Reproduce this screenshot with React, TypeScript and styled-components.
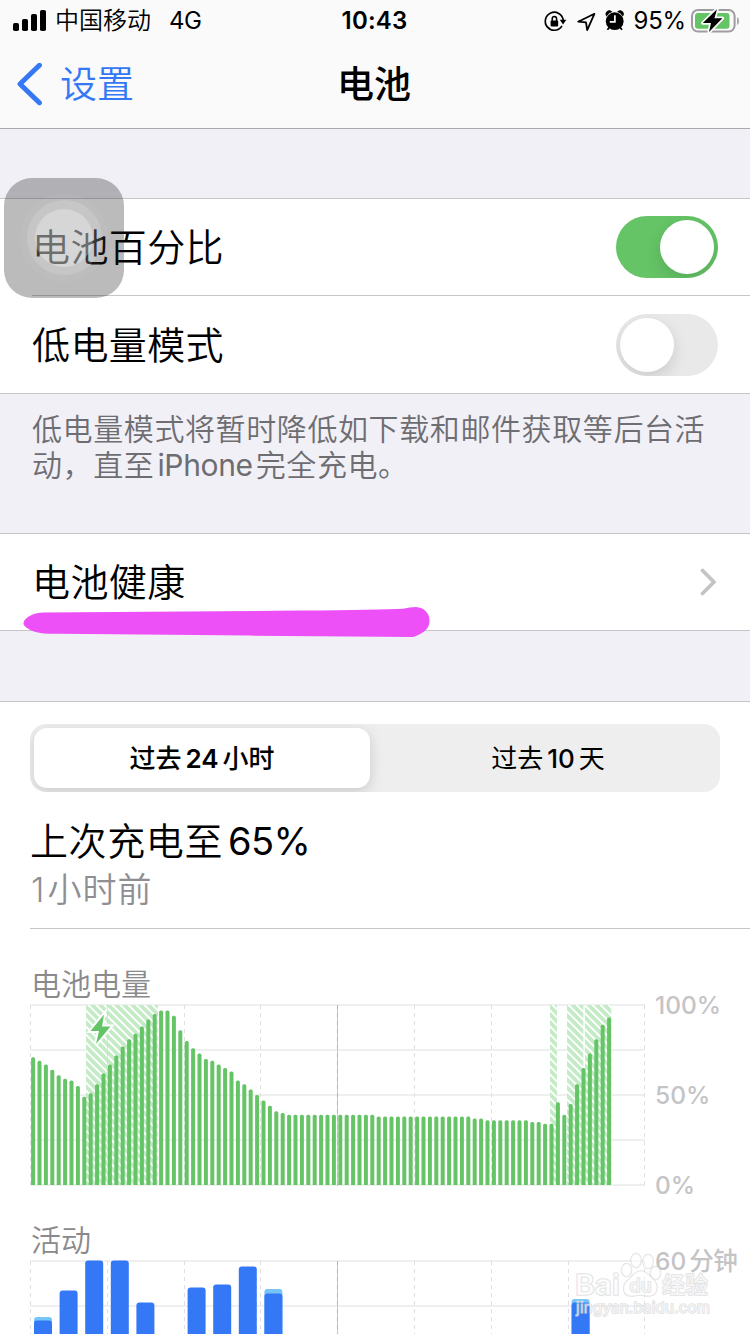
import React from "react";
import styled, { createGlobalStyle } from "styled-components";

const GlobalStyle = createGlobalStyle`
  html, body { margin: 0; padding: 0; }
  body {
    width: 750px;
    height: 1334px;
    overflow: hidden;
    background: #f1f0f6;
    font-family: Inter, "Noto Sans CJK SC", sans-serif;
    color: #000;
  }
  * { box-sizing: border-box; }
`;

const Screen = styled.main`
  position: relative;
  width: 750px;
  height: 1334px;
  overflow: hidden;
  display: flex;
  flex-direction: column;
  background: #f1f0f6;
`;

const Header = styled.header`
  flex: none;
  height: 129px;
  background: #fafafb;
  border-bottom: 1px solid #a9a9ac;
`;

const StatusBar = styled.div`
  display: grid;
  grid-template-columns: 1fr auto 1fr;
  align-items: center;
  height: 40px;
  padding: 0 11px 0 13px;
  font-size: 24px;
  line-height: 40px;
`;

const StatusGroup = styled.div<{ $end?: boolean }>`
  display: flex;
  align-items: center;
  height: 40px;
  justify-content: ${(p) => (p.$end ? "flex-end" : "flex-start")};
`;

const Carrier = styled.span`
  margin-left: 9px;
  padding-top: 1px;
  font-weight: 350;
`;

const Network = styled.span`
  margin-left: 18px;
  padding-top: 1px;
  letter-spacing: -0.5px;
`;

const Clock = styled.span`
  padding-top: 1px;
  margin-left: -3px;
  font-weight: 600;
  letter-spacing: 0.2px;
`;

const Percent = styled.span`
  margin: 0 5px 0 7px;
  padding-top: 1px;
  letter-spacing: -0.2px;
`;

const NavBar = styled.div`
  display: grid;
  grid-template-columns: 1fr auto 1fr;
  align-items: center;
  height: 88px;
  padding: 0 17px 0 15px;
`;

const BackButton = styled.div`
  display: flex;
  align-items: center;
  gap: 17px;
  color: #3478f6;
  font-size: 37px;
  font-weight: 350;
  line-height: 86px;
`;

const Title = styled.h1`
  margin: 0;
  padding-top: 1px;
  font-size: 37px;
  font-weight: 500;
  line-height: 88px;
`;

const Group = styled.section<{ $top: number }>`
  flex: none;
  margin-top: ${(p) => p.$top}px;
  background: #fff;
  border-top: 1px solid #c6c6c9;
  border-bottom: 1px solid #c6c6c9;
`;

const Row = styled.div<{ $divided?: boolean; $height: number }>`
  display: flex;
  align-items: center;
  justify-content: space-between;
  height: ${(p) => p.$height}px;
  margin-left: 32px;
  padding-right: 32px;
  border-bottom: ${(p) => (p.$divided ? "1px solid #c6c6c9" : "none")};
  font-size: 38px;
  letter-spacing: 0.4px;
  font-weight: 350;
`;

const RowLabel = styled.span<{ $lift?: number }>`
  padding-bottom: ${(p) => p.$lift ?? 5}px;
`;

const Toggle = styled.span<{ $on: boolean }>`
  display: flex;
  justify-content: ${(p) => (p.$on ? "flex-end" : "flex-start")};
  width: 102px;
  height: 62px;
  padding: 4px;
  border-radius: 31px;
  overflow: hidden;
  background: ${(p) => (p.$on ? "#65c466" : "#e9e9ea")};
`;

const Knob = styled.span`
  width: 54px;
  height: 54px;
  border-radius: 50%;
  background: #fff;
  box-shadow: 0 6px 16px rgba(0, 0, 0, 0.13);
`;

const Footnote = styled.p`
  flex: none;
  height: 139px;
  margin: 0;
  padding: 17px 32px 0;
  color: #6d6d72;
  font-size: 30px;
  font-weight: 350;
  line-height: 36px;
  letter-spacing: 0.6px;
  white-space: nowrap;
`;

const Latin = styled.span<{ $gap: number; $spacing?: number; $weight?: number }>`
  margin: 0 ${(p) => p.$gap}px;
  font-weight: ${(p) => p.$weight ?? 400};
  letter-spacing: ${(p) => p.$spacing ?? 0}px;
`;

const Usage = styled.section`
  flex: 1;
  margin-top: 70px;
  padding-left: 30px;
  background: #fff;
  border-top: 1px solid #c6c6c9;
`;

const Segmented = styled.div`
  display: flex;
  width: 690px;
  height: 68px;
  margin-top: 22px;
  padding: 4px;
  border-radius: 16px;
  overflow: hidden;
  background: #eeeeee;
`;

const Segment = styled.div<{ $active?: boolean }>`
  flex: ${(p) => (p.$active ? "0 0 336px" : "1")};
  padding-left: ${(p) => (p.$active ? 0 : 10)}px;
  height: 60px;
  border-radius: 13px;
  text-align: center;
  font-size: 26px;
  line-height: 62px;
  font-weight: ${(p) => (p.$active ? 500 : 400)};
  background: ${(p) => (p.$active ? "#fff" : "transparent")};
  box-shadow: ${(p) => (p.$active ? "0 4px 14px rgba(0,0,0,.15)" : "none")};
`;

const Summary = styled.div`
  height: 137px;
  padding-top: 24px;
  border-bottom: 1px solid #c6c6c9;
`;

const LastCharge = styled.div`
  height: 50px;
  font-size: 38px;
  font-weight: 350;
  line-height: 50px;
  letter-spacing: 0.6px;
`;

const TimeAgo = styled.div`
  height: 50px;
  padding-left: 1px;
  font-size: 34px;
  font-weight: 350;
  line-height: 48px;
  letter-spacing: 1px;
  color: #8e8e93;
`;

const Hours = styled.span`
  margin-left: 2px;
  letter-spacing: 1.1px;
`;

const ChartTitle = styled.h2<{ $top: number }>`
  margin: ${(p) => p.$top}px 0 0;
  padding-left: 1px;
  height: 40px;
  color: #8a8a8d;
  font-size: 30px;
  font-weight: 350;
  line-height: 40px;
`;

const ChartRow = styled.div`
  display: flex;
  align-items: flex-start;
`;

const ChartArea = styled.svg`
  flex: none;
  display: block;
`;

const AxisLabels = styled.div<{ $height: number }>`
  display: flex;
  flex-direction: column;
  justify-content: space-between;
  height: ${(p) => p.$height}px;
  margin-top: -14px;
  margin-left: 9px;
  color: #c4c4c6;
  font-size: 24.5px;
  font-weight: 500;
  line-height: 30px;
  white-space: nowrap;
`;

const Marker = styled.svg`
  position: absolute;
  left: 20px;
  top: 604px;
`;

const AssistiveTouch = styled.div`
  position: absolute;
  left: 4px;
  top: 178px;
  width: 120px;
  height: 120px;
  padding-bottom: 1px;
  display: grid;
  place-items: center;
  border-radius: 28px;
  background: rgba(30, 30, 30, 0.3);
`;

const Ring = styled.div<{ $size: number; $alpha: number }>`
  display: grid;
  place-items: center;
  width: ${(p) => p.$size}px;
  height: ${(p) => p.$size}px;
  border-radius: 50%;
  background: rgba(255, 255, 255, ${(p) => p.$alpha});
`;

const Watermark = styled.svg`
  position: absolute;
  left: 566px;
  top: 1246px;
`;

const pct: number[] = [
  71, 69, 67, 64, 61, 59, 58, 55, 49, 51, 56, 62, 67, 72, 77, 81, 84, 88, 92, 95,
  97, 97, 94, 86, 80, 76, 73, 70, 69, 67, 65, 63, 58, 56, 53, 50, 47, 44, 41, 40,
  ...Array(14).fill(39),
  ...Array(15).fill(38),
  37, 37,
  ...Array(7).fill(36),
  35, 35, 34, 34, 46, 39, 45, 56, 65, 73, 81, 89, 93,
];

const charging: [number, number][] = [
  [56, 72],
  [520, 7],
  [537, 16.3],
  [555, 26.3],
];

type Activity = { slot: number; top: number; idle?: number };
const activity: Activity[] = [
  { slot: 0, top: 60, idle: 56.5 },
  { slot: 1, top: 30 },
  { slot: 2, top: 0 },
  { slot: 3, top: 0 },
  { slot: 4, top: 42 },
  { slot: 6, top: 27 },
  { slot: 7, top: 24 },
  { slot: 8, top: 6 },
  { slot: 9, top: 33, idle: 28.5 },
  { slot: 21, top: 42, idle: 38.5 },
];

const Grid = ({ height }: { height: number }) => (
  <g>
    {[0, 45, 90, 135, 180]
      .filter((y) => y < height)
      .map((y) => (
        <rect key={y} x={0} y={y} width={615} height={2} fill="#efeff0" />
      ))}
    {Array.from({ length: 9 }, (_, i) => {
      const x = 0.5 + Math.round(i * 76.8);
      return i === 4 ? (
        <g key={i}>
          <path d={`M${x} 1V${height}`} stroke="#cbcbcd" />
          <path d={`M${x} 1V${height}`} stroke="#b3b3b5" strokeDasharray="4 4" />
        </g>
      ) : (
        <path key={i} d={`M${x} 1V${height}`} stroke="#dfdfe1" strokeDasharray="4 4" />
      );
    })}
  </g>
);

const LevelChart = () => (
  <ChartArea width={616} height={182} viewBox="0 0 616 182">
    <defs>
      <pattern
        id="hatch"
        width="5.66"
        height="5.66"
        patternUnits="userSpaceOnUse"
        patternTransform="rotate(-45)"
      >
        <rect width="5.66" height="5.66" fill="#c3ebc6" />
        <rect width="1.9" height="5.66" fill="#fff" />
      </pattern>
    </defs>
    <Grid height={182} />
    {charging.map(([x, w]) => (
      <rect key={x} x={x} y={1} width={w} height={180} fill="url(#hatch)" />
    ))}
    <path d="M77.5 1V181" stroke="#9fb8a1" strokeOpacity=".35" strokeDasharray="4 4" />
    {pct.map((p, i) => (
      <path
        key={i}
        d={`M${1.1 + i * 6.4} 181v${-(p * 1.8 - 1.6)}q0 -1.6 1.6 -1.6h.8q1.6 0 1.6 1.6V181z`}
        fill="#65c466"
      />
    ))}
    <path
      d="M74 10.5L60.5 27H69L66 40L80.5 22.5H72z"
      fill="#65c466"
      stroke="#fff"
      strokeWidth="4"
      paintOrder="stroke"
    />
  </ChartArea>
);

const ActivityChart = () => (
  <ChartArea width={616} height={74} viewBox="0 0 616 74">
    <Grid height={74} />
    {activity.map(({ slot, top, idle }) => {
      const x = 4 + slot * 25.6;
      return (
        <g key={slot}>
          {idle !== undefined && (
            <rect x={x} y={idle + 0.5} width={18} height={90} rx={3} fill="#76c5f8" />
          )}
          <rect x={x} y={top + 0.5} width={18} height={90} rx={3} fill="#3478f6" />
        </g>
      );
    })}
  </ChartArea>
);

const SignalIcon = () => (
  <svg width="33" height="22" viewBox="0 0 33 22">
    <rect x="0" y="13" width="6" height="8" rx="1.8" />
    <rect x="9" y="9" width="6" height="12" rx="1.8" />
    <rect x="18" y="4" width="6" height="17" rx="1.8" />
    <rect x="27" y="0" width="6" height="21" rx="1.8" />
  </svg>
);

const StatusIcons = () => (
  <svg width="84" height="24" viewBox="543 8 84 24">
    <path
      d="M561.6 25.5A9 9 0 1 1 563.2 19"
      fill="none"
      stroke="#000"
      strokeWidth="1.7"
      strokeLinecap="round"
    />
    <path d="M559.8 18.8H566.4L563 23.4z" />
    <rect x="550.6" y="19.4" width="7.6" height="6" rx="1" />
    <path d="M552.2 20v-2a2.2 2.4 0 0 1 4.4 0v2" fill="none" stroke="#000" strokeWidth="1.5" />
    <path
      d="M594.4 12.8L578.2 20.7L586 21.4L587.2 29.2z"
      fill="none"
      stroke="#000"
      strokeWidth="1.8"
      strokeLinejoin="round"
    />
    <circle cx="614.7" cy="20.2" r="8.9" />
    <path
      d="M606.6 14.4A8 8 0 0 1 611.2 10.7A3 3 0 0 0 606.6 14.4zM622.8 14.4A8 8 0 0 0 618.2 10.7A3 3 0 0 1 622.8 14.4z"
      stroke="#000"
      strokeWidth="1.2"
    />
    <path d="M609.5 26.2L607.4 28.8M619.9 26.2L622 28.8" stroke="#000" strokeWidth="1.8" />
    <path d="M614.9 14.2V20.8H609.8" fill="none" stroke="#fafafb" strokeWidth="1.7" />
  </svg>
);

const BatteryIcon = () => (
  <svg width="48" height="26" viewBox="691 7 48 26">
    <rect x="692" y="9" width="42.6" height="21.6" rx="6" fill="none" stroke="#9d9d9f" strokeWidth="2" />
    <rect x="695" y="12" width="34.5" height="15.8" rx="3" fill="#65c466" />
    <path d="M737.2 16v8q1.8-1 1.8-4t-1.8-4z" fill="#9d9d9f" />
    <path
      d="M717 8.2L702.8 22H711L709 31L722.4 17.2H714.4z"
      stroke="#fafafb"
      strokeWidth="3.4"
      paintOrder="stroke"
      strokeLinejoin="round"
    />
  </svg>
);

export default function App() {
  return (
    <>
      <GlobalStyle />
      <Screen>
        <Header>
          <StatusBar>
            <StatusGroup>
              <SignalIcon />
              <Carrier>中国移动</Carrier>
              <Network>4G</Network>
            </StatusGroup>
            <Clock>10:43</Clock>
            <StatusGroup $end>
              <StatusIcons />
              <Percent>95%</Percent>
              <BatteryIcon />
            </StatusGroup>
          </StatusBar>
          <NavBar>
            <BackButton>
              <svg width="28" height="44" viewBox="0 0 28 44">
                <path
                  d="M24.4 2.3L5 21L24.4 39.7"
                  fill="none"
                  stroke="#3478f6"
                  strokeWidth="5"
                  strokeLinecap="round"
                  strokeLinejoin="round"
                />
              </svg>
              <span>设置</span>
            </BackButton>
            <Title>电池</Title>
          </NavBar>
        </Header>

        <Group $top={69}>
          <Row $height={97} $divided>
            <RowLabel>电池百分比</RowLabel>
            <Toggle $on>
              <Knob />
            </Toggle>
          </Row>
          <Row $height={97}>
            <RowLabel $lift={4}>低电量模式</RowLabel>
            <Toggle $on={false}>
              <Knob />
            </Toggle>
          </Row>
        </Group>
        <Footnote>
          低电量模式将暂时降低如下载和邮件获取等后台活
          <br />
          动，直至
          <Latin $gap={3} $spacing={-0.35}>
            iPhone
          </Latin>
          完全充电。
        </Footnote>

        <Group $top={0}>
          <Row $height={96}>
            <RowLabel>电池健康</RowLabel>
            <svg width="18" height="28" viewBox="0 0 18 28">
              <path
                d="M2.5 2.5L14 14L2.5 25.5"
                fill="none"
                stroke="#c4c4c6"
                strokeWidth="3.8"
                strokeLinecap="round"
                strokeLinejoin="round"
              />
            </svg>
          </Row>
        </Group>

        <Usage>
          <Segmented>
            <Segment $active>
              过去
              <Latin $gap={4} $weight={600}>
                24
              </Latin>
              小时
            </Segment>
            <Segment>
              过去
              <Latin $gap={4} $weight={500}>
                10
              </Latin>
              天
            </Segment>
          </Segmented>
          <Summary>
            <LastCharge>
              上次充电至
              <Latin $gap={5} $spacing={-0.6}>
                65%
              </Latin>
            </LastCharge>
            <TimeAgo>
              1<Hours>小时前</Hours>
            </TimeAgo>
          </Summary>
          <ChartTitle $top={35}>电池电量</ChartTitle>
          <ChartRow>
            <LevelChart />
            <AxisLabels $height={210}>
              <span>100%</span>
              <span>50%</span>
              <span>0%</span>
            </AxisLabels>
          </ChartRow>
          <ChartTitle $top={20}>活动</ChartTitle>
          <ChartRow>
            <ActivityChart />
            <AxisLabels $height={30}>
              <span>
                60
                <Latin $gap={3} $spacing={-0.5} $weight={500}>
                  分钟
                </Latin>
              </span>
            </AxisLabels>
          </ChartRow>
        </Usage>

        <Marker width="412" height="36" viewBox="20 604 412 36">
          <path
            d="M23.5 622.8C25 617 34 612.8 44 612.6L300 610.6Q380 610 403 608.8Q410 607 416 607C424 607.5 429.5 613 429.5 620.5C429.5 628 425 633 413 637L250 635.6L60 633.8C43 633.8 35 633 29 629.2Q23 626 23.5 622.8z"
            fill="#ec50f6"
          />
        </Marker>

        <AssistiveTouch>
          <Ring $size={88} $alpha={0.04}>
            <Ring $size={75} $alpha={0.15}>
              <Ring $size={58} $alpha={0.28} />
            </Ring>
          </Ring>
        </AssistiveTouch>

        <Watermark width="160" height="80" viewBox="566 1246 160 80">
          <g
            fill="#fff"
            stroke="#cfcfd1"
            strokeWidth="1.6"
            fillOpacity=".6"
            strokeOpacity=".6"
            paintOrder="stroke"
            fontFamily='Inter, "Noto Sans CJK SC", sans-serif'
          >
            <ellipse cx="626.5" cy="1270" rx="5" ry="6.5" />
            <ellipse cx="636" cy="1260.5" rx="5" ry="7" />
            <ellipse cx="648" cy="1261.5" rx="5.2" ry="7" />
            <ellipse cx="655.5" cy="1273" rx="5" ry="6.5" />
            <path d="M641 1271C646 1271 649 1275 653 1279C660 1286 657 1296 649 1296C645 1296 643 1295 640 1295C637 1295 635 1296 631 1296C623 1296 621 1286 628 1280C633 1276 635 1271 641 1271z" />
            <text x="575" y="1295" fontSize="28" fontWeight="600" textLength="45" lengthAdjust="spacingAndGlyphs">Bai</text>
            <text x="629.5" y="1291.5" fontSize="18" fontWeight="500" textLength="22" lengthAdjust="spacingAndGlyphs">du</text>
            <text x="662" y="1293" fontSize="23" fontWeight="500">经验</text>
            <text x="576" y="1313" fontSize="15" fontWeight="400" textLength="134">jingyan.baidu.com</text>
          </g>
        </Watermark>
      </Screen>
    </>
  );
}
